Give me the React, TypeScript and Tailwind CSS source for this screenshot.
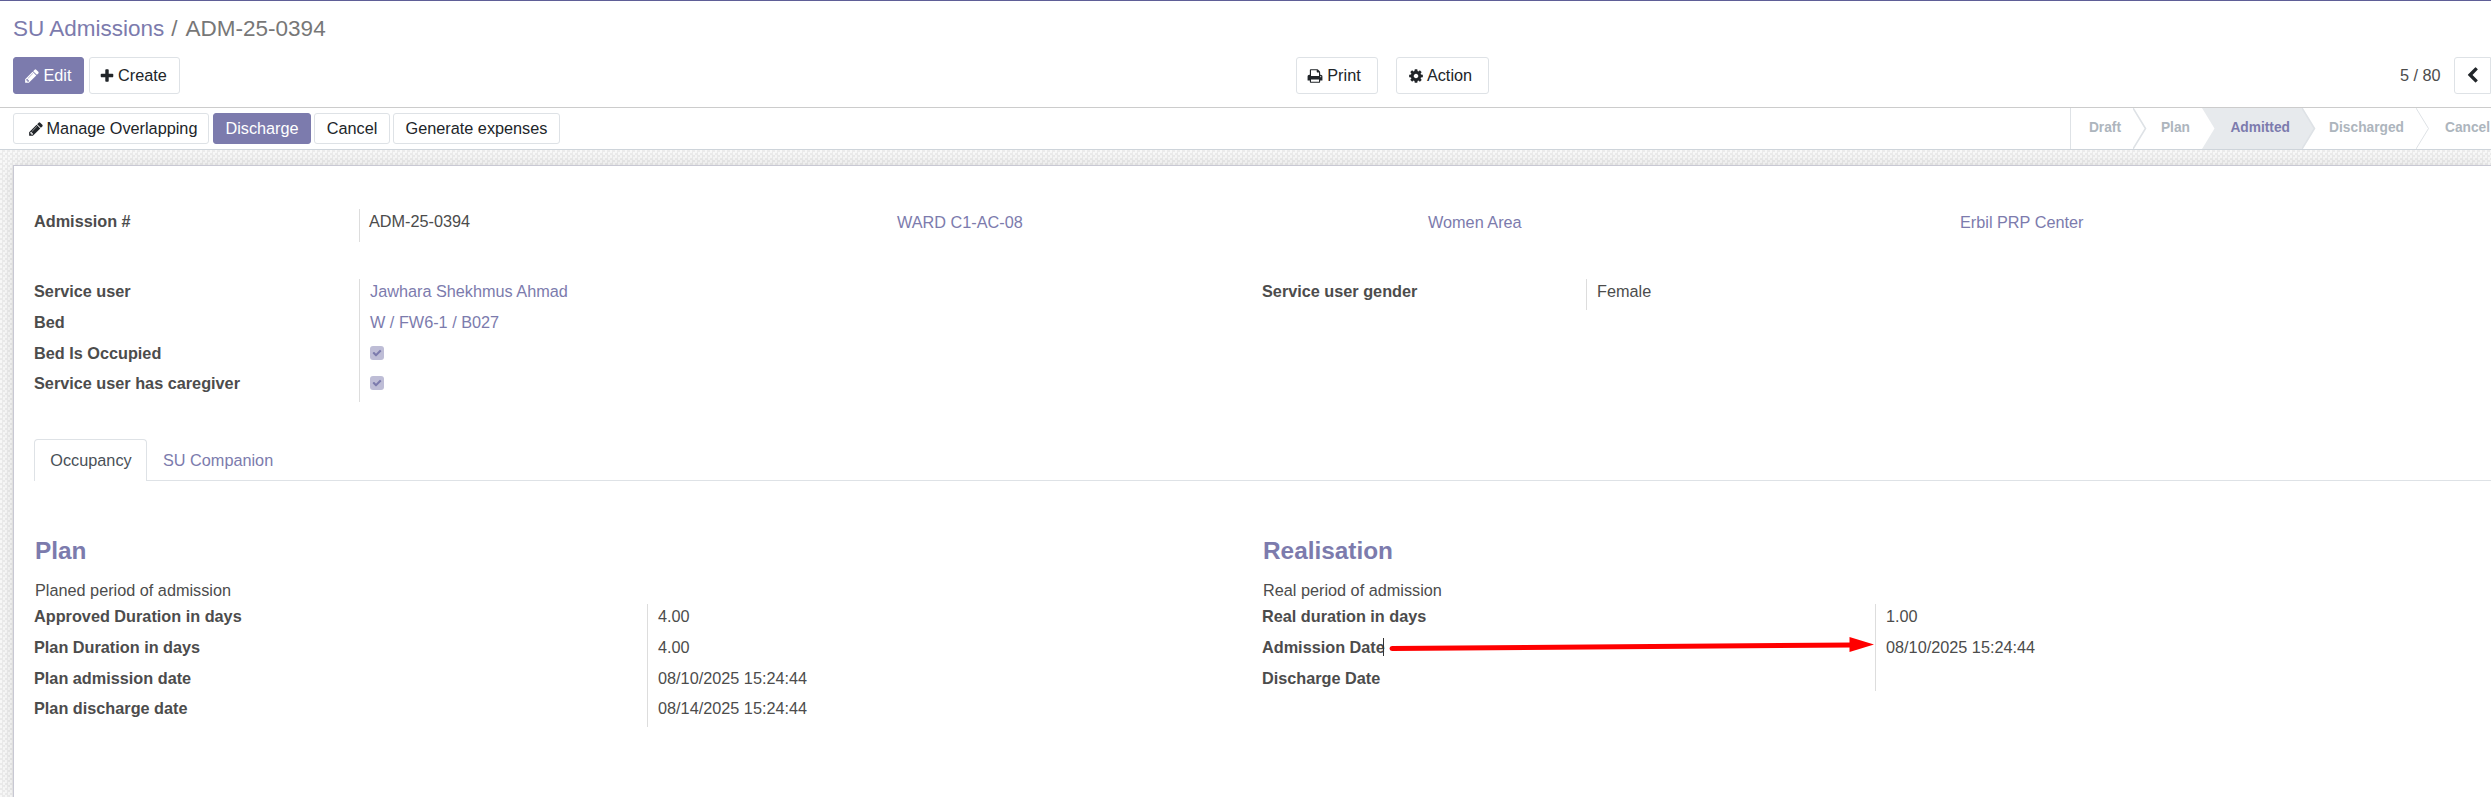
import type { ReactNode } from "react";

const ICONS = {
  pencil:
    "M491 1536l91-91-235-235-91 91v107h128v128h107zm523-928q0-22-22-22-10 0-17 7l-542 542q-7 7-7 17 0 22 22 22 10 0 17-7l542-542q7-7 7-17zm-54-192l416 416-832 832h-416v-416zm683 96q0 53-37 90l-166 166-416-416 166-165q36-38 90-38 53 0 91 38l235 234q37 39 37 91z",
  plus:
    "M1600 736v192q0 40-28 68t-68 28h-416v416q0 40-28 68t-68 28h-192q-40 0-68-28t-28-68v-416h-416q-40 0-68-28t-28-68v-192q0-40 28-68t68-28h416v-416q0-40 28-68t68-28h192q40 0 68 28t28 68v416h416q40 0 68 28t28 68z",
  print:
    "M448 1536h896v-256h-896v256zm0-640h896v-384h-160q-40 0-68-28t-28-68v-160h-640v640zm1152 64q0-26-19-45t-45-19-45 19-19 45 19 45 45 19 45-19 19-45zm128 0v416q0 13-9.5 22.5t-22.5 9.5h-224v160q0 40-28 68t-68 28h-960q-40 0-68-28t-28-68v-160h-224q-13 0-22.5-9.5t-9.5-22.5v-416q0-79 56.5-135.5t135.5-56.5h64v-544q0-40 28-68t68-28h672q40 0 88 20t76 48l152 152q28 28 48 76t20 88v256h64q79 0 135.5 56.5t56.5 135.5z",
  cog:
    "M1152 896q0-106-75-181t-181-75-181 75-75 181 75 181 181 75 181-75 75-181zm512-109v222q0 12-8 23t-20 13l-185 28q-19 54-39 91 35 50 107 138 10 12 10 25t-9 23q-27 37-99 108t-94 71q-12 0-26-9l-138-108q-44 23-91 38-16 136-29 186-7 28-36 28h-222q-14 0-24.5-8.5t-11.5-21.5l-28-184q-49-16-90-37l-141 107q-10 9-25 9-14 0-25-11-126-114-165-168-7-10-7-23 0-12 8-23 15-21 51-66.5t54-70.5q-27-50-41-99l-183-27q-13-2-21-12.5t-8-23.5v-222q0-12 8-23t19-13l186-28q14-46 39-92-40-57-107-138-10-12-10-24 0-10 9-23 26-36 98.5-107.5t94.5-71.5q13 0 26 10l138 107q44-23 91-38 16-136 29-186 7-28 36-28h222q14 0 24.5 8.5t11.5 21.5l28 184q49 16 90 37l142-107q9-9 24-9 13 0 25 10 129 119 165 170 7 8 7 22 0 12-8 23-15 21-51 66.5t-54 70.5q26 50 41 98l183 28q13 2 21 12.5t8 23.5z",
  left:
    "M1427 301l-531 531 531 531q19 19 19 45t-19 45l-166 166q-19 19-45 19t-45-19l-742-742q-19-19-19-45t19-45l742-742q19-19 45-19t45 19l166 166q19 19 19 45t-19 45z",
  check:
    "M1671 566q0 40-28 68l-724 724-136 136q-28 28-68 28t-68-28l-136-136-362-362q-28-28-28-68t28-68l136-136q28-28 68-28t68 28l294 295 656-657q28-28 68-28t68 28l136 136q28 28 28 68z",
};

function Icon({ name, className }: { name: keyof typeof ICONS; className: string }) {
  return (
    <svg viewBox="0 0 1792 1792" fill="currentColor" className={`shrink-0 ${className}`}>
      <path d={ICONS[name]} />
    </svg>
  );
}

function Button({ primary, className, children }: { primary?: boolean; className: string; children: ReactNode }) {
  const tone = primary
    ? "border-[#7c7bad] bg-[#7c7bad] text-white"
    : "border-[#dee2e6] bg-white text-[#212529]";
  return (
    <button className={`flex shrink-0 items-center justify-center rounded-[3px] border whitespace-nowrap ${tone} ${className}`}>
      {children}
    </button>
  );
}

function Checkbox() {
  return (
    <span className="flex size-[14px] items-center justify-center rounded-[3px] bg-[#bebdd6] text-[#7c7bad]">
      <Icon name="check" className="size-[10px]" />
    </span>
  );
}

type Row = { label: ReactNode; value: ReactNode };

function Fields({ rows, labelWidth, className }: { rows: Row[]; labelWidth: string; className?: string }) {
  return (
    <div className={`flex flex-col ${className ?? ""}`}>
      {rows.map((row, i) => (
        <div key={i} className={`flex ${row.value ? "h-[30.75px]" : "h-[25px]"}`}>
          <div className={`shrink-0 leading-[25px] font-bold ${labelWidth}`}>{row.label}</div>
          <div className="flex h-full items-start border-l border-[#dddddd] pl-[10px] leading-[25px]">
            {row.value}
          </div>
        </div>
      ))}
    </div>
  );
}

function Stage({ width, children, active, tail }: { width: string; children: string; active?: boolean; tail?: "thick" | "thin" | "toActive" }) {
  return (
    <div className={`flex h-full shrink-0 items-stretch ${width} ${active ? "bg-[#e7eaed] text-[#7c7bad]" : "text-[#adb5bd]"}`}>
      <span className="flex flex-1 items-start justify-end pt-[10px] pr-[12px]">{children}</span>
      {tail && (
        <svg width="14" height="41" viewBox="0 0 14 41" className={`shrink-0 ${tail === "toActive" ? "bg-[#e7eaed]" : "bg-white"}`}>
          <path
            d="M0 0L12.5 20.5L0 41Z"
            fill={active ? "#e7eaed" : "#ffffff"}
          />
          {tail !== "toActive" && (
            <path d="M0 0L12.5 20.5L0 41" fill="none" stroke="#dee2e6" strokeWidth={tail === "thick" ? 1.6 : 1} />
          )}
        </svg>
      )}
    </div>
  );
}

const link = "text-[#7c7bad]";

export default function App() {
  return (
    <div className="flex h-[797px] w-[2491px] flex-col overflow-hidden bg-white font-['Liberation_Sans',Arial,sans-serif] text-[16.25px] text-[#4c4c4c]">
      <header className="flex h-[108px] shrink-0 flex-col border-t border-b border-t-[#5f5e97] border-b-[#cccccc]">
        <nav className="flex h-[56px] gap-[7px] pt-[14px] pl-[13px] text-[22.5px] leading-[27px] text-[#777777]">
          <span className={link}>SU Admissions</span>
          <span>/</span>
          <span className="pl-px">ADM-25-0394</span>
        </nav>
        <div className="flex h-[37px] items-center pl-[13px]">
          <Button primary className="h-[37px] w-[71px] gap-[3px] pr-px">
            <Icon name="pencil" className="size-4" />
            Edit
          </Button>
          <Button className="ml-[5px] h-[37px] w-[91px] gap-[3px] pr-[3px]">
            <Icon name="plus" className="size-4" />
            Create
          </Button>
          <Button className="ml-[1116px] h-[37px] w-[82px] gap-1 pr-[6px]">
            <Icon name="print" className="size-4" />
            Print
          </Button>
          <Button className="ml-[18px] h-[37px] w-[93px] gap-[3px] pr-[5px]">
            <Icon name="cog" className="size-4" />
            Action
          </Button>
          <span className="ml-[911px] w-[54px]">5 / 80</span>
          <Button className="h-[37px] w-[37px] rounded-r-none">
            <Icon name="left" className="size-[17px]" />
          </Button>
        </div>
      </header>

      <div className="flex h-[42px] shrink-0 items-center border-b border-[#ced4da] pl-[13px]">
        <Button className="h-[31px] w-[196px] gap-[3px] pl-[3px]">
          <Icon name="pencil" className="size-4" />
          Manage Overlapping
        </Button>
        <Button primary className="ml-1 h-[31px] w-[98px]">Discharge</Button>
        <Button className="ml-[3px] h-[31px] w-[76px]">Cancel</Button>
        <Button className="ml-[3px] h-[31px] w-[167px]">Generate expenses</Button>
        <div className="ml-[1510px] flex h-full border-l border-[#dee2e6] text-[13.75px] font-bold">
          <Stage width="w-[76px]" tail="thick">Draft</Stage>
          <Stage width="w-[69px]" tail="toActive">Plan</Stage>
          <Stage width="w-[100px]" active tail="thick">Admitted</Stage>
          <Stage width="w-[114px]" tail="thin">Discharged</Stage>
          <span className="pt-[10px] pl-[15px] text-[#adb5bd]">Cancel</span>
        </div>
      </div>

      <main className="flex min-h-0 flex-1 bg-[#efefef] bg-[repeating-conic-gradient(#ebebeb_0_25%,#f8f8f8_0_50%)] bg-[size:5px_5px] pt-[15px] pl-[13px]">
        <section className="flex flex-1 flex-col border-t border-l border-[#c8c8d3] bg-white pt-[42px] pl-5 shadow-[0_0_16px_-2px_rgba(0,0,0,0.14)]">
          <div className="flex h-[71px] shrink-0">
            <div className="mt-px flex h-[33px] w-[863px]">
              <div className="w-[325px] leading-[24px] font-bold">Admission #</div>
              <div className="border-l border-[#dddddd] pl-[9px] leading-[24px]">ADM-25-0394</div>
            </div>
            <div className={`w-[531px] pt-px leading-[27px] ${link}`}>WARD C1-AC-08</div>
            <div className={`w-[532px] pt-px leading-[27px] ${link}`}>Women Area</div>
            <div className={`pt-px leading-[27px] ${link}`}>Erbil PRP Center</div>
          </div>

          <div className="flex h-[160px] shrink-0">
            <Fields
              className="w-[1228px]"
              labelWidth="w-[325px]"
              rows={[
                { label: "Service user", value: <span className={link}>Jawhara Shekhmus Ahmad</span> },
                { label: "Bed", value: <span className={link}>W / FW6-1 / B027</span> },
                { label: "Bed Is Occupied", value: <span className="pt-[5px]"><Checkbox /></span> },
                { label: "Service user has caregiver", value: <span className="pt-[5px]"><Checkbox /></span> },
              ]}
            />
            <Fields labelWidth="w-[324px]" rows={[{ label: "Service user gender", value: "Female" }]} />
          </div>

          <div className="flex h-[42px] shrink-0">
            <div className="flex w-[113px] items-center justify-center rounded-t-[4px] border border-b-0 border-[#dee2e6] pl-px text-[#495057]">
              Occupancy
            </div>
            <div className={`flex flex-1 items-center border-b border-[#dee2e6] pt-[2px] pl-4 ${link}`}>SU Companion</div>
          </div>

          <div className="flex pt-[55px]">
            <div className="w-[1228px]">
              <h2 className={`h-[43px] pl-px text-[24.375px] leading-[30px] font-bold ${link}`}>Plan</h2>
              <p className="h-[25px] pl-px leading-[22px]">Planed period of admission</p>
              <Fields
                labelWidth="w-[613px]"
                rows={[
                  { label: "Approved Duration in days", value: "4.00" },
                  { label: "Plan Duration in days", value: "4.00" },
                  { label: "Plan admission date", value: "08/10/2025 15:24:44" },
                  { label: "Plan discharge date", value: "08/14/2025 15:24:44" },
                ]}
              />
            </div>
            <div>
              <h2 className={`h-[43px] pl-px text-[24.375px] leading-[30px] font-bold ${link}`}>Realisation</h2>
              <p className="h-[25px] pl-px leading-[22px]">Real period of admission</p>
              <div className="relative">
                <Fields
                  labelWidth="w-[613px]"
                  rows={[
                    { label: "Real duration in days", value: "1.00" },
                    { label: "Admission Date", value: "08/10/2025 15:24:44" },
                    { label: "Discharge Date", value: "" },
                  ]}
                />
                <svg width="500" height="30" viewBox="0 0 500 30" className="absolute top-[30px] left-[120px]">
                  <path d="M1.5 4V22" stroke="#333333" strokeWidth="1" />
                  <path d="M10 14.5L470 11" stroke="#ff0000" strokeWidth="5" strokeLinecap="round" />
                  <path d="M467.5 3L492 10.5L467.5 18Z" fill="#ff0000" />
                </svg>
              </div>
            </div>
          </div>
        </section>
      </main>
    </div>
  );
}
